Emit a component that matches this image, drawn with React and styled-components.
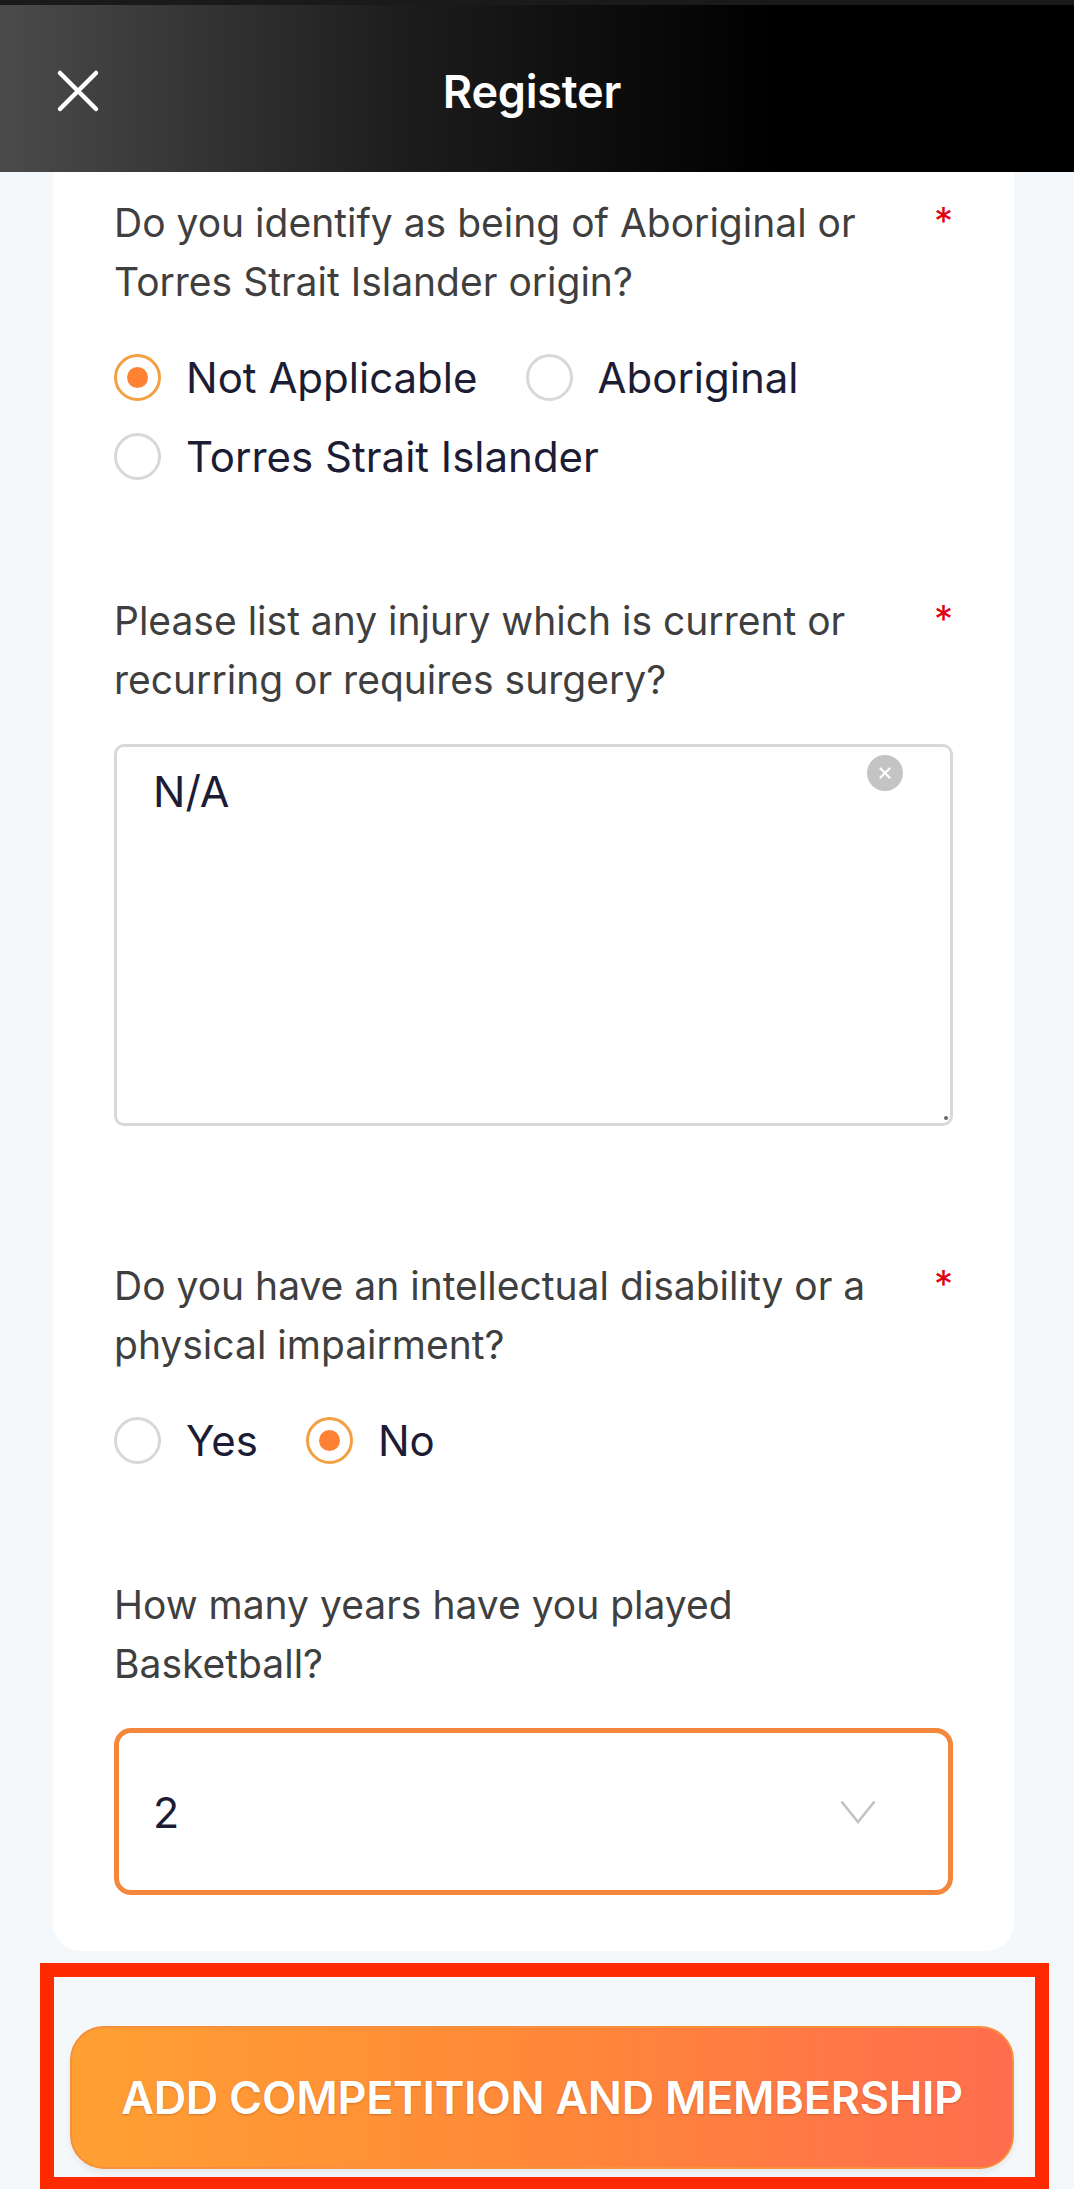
import styled, { createGlobalStyle } from "styled-components";

const GlobalStyle = createGlobalStyle`
  * { box-sizing: border-box; }
  body {
    margin: 0;
    background: #f5f8fb;
    font-family: Inter, "Noto Sans", sans-serif;
  }
`;

const Page = styled.div`
  width: 1074px;
  height: 2189px;
  overflow: hidden;
  display: flex;
  flex-direction: column;
  background: #f5f8fb;
`;

const Header = styled.header`
  height: 172px;
  flex-shrink: 0;
  display: grid;
  grid-template-columns: 1fr auto 1fr;
  align-items: center;
  padding: 5px 56px 0;
  background: linear-gradient(90deg, #4b4b4b 0%, #1c1c1c 38%, #000 72%);
  border-top: 5px solid #1a1a1a;

  >h1 {
    margin: 0 0 0 -10px;
    color: #fff;
    font-size: 45px;
    font-weight: 600;
    letter-spacing: -0.2px;
  }
`;

const CloseButton = styled.button`
  justify-self: start;
  width: 44px;
  height: 44px;
  padding: 0;
  border: 0;
  background: none;
  display: flex;
`;

const Card = styled.main`
  margin: 0 60px 0 53px;
  padding: 22px 61px 56px;
  background: #fff;
  border-radius: 0 0 28px 28px;
  display: flex;
  flex-direction: column;
  gap: 107px;
`;

const Field = styled.section`
  display: flex;
  flex-direction: column;
`;

const LabelRow = styled.div`
  display: flex;
  justify-content: space-between;
  align-items: flex-start;
  color: #3f3f3f;
  font-size: 39px;
  line-height: 58.5px;

  >label {
    width: 800px;
  }
`;

const Required = styled.span`
  color: #e3000f;
  font-size: 38px;
  line-height: 54px;
`;

const RadioGroup = styled.div`
  margin-top: 38px;
  display: flex;
  flex-wrap: wrap;
  column-gap: 48px;
  row-gap: 22px;
`;

const RadioOption = styled.label`
  height: 57px;
  display: flex;
  align-items: center;
  gap: 25px;
  color: #1c1c34;
  font-size: 42px;
`;

const RadioCircle = styled.span`
  width: 47px;
  height: 47px;
  flex-shrink: 0;
  border-radius: 50%;
  border: 3px solid ${(p) => (p.$checked ? "#f2a042" : "#d8d8d8")};
  display: flex;
  align-items: center;
  justify-content: center;

  &::after {
    content: "";
    width: 21px;
    height: 21px;
    border-radius: 50%;
    background: #ff8234;
    display: ${(p) => (p.$checked ? "block" : "none")};
  }
`;

const TextBox = styled.div`
  position: relative;
  margin: 35px 0 24px;

  &::after {
    content: "";
    position: absolute;
    right: 5px;
    bottom: 6px;
    width: 4px;
    height: 4px;
    border-radius: 50%;
    background: #666;
  }
`;

const TextArea = styled.textarea`
  display: block;
  width: 100%;
  height: 382px;
  padding: 16px 36px;
  border: 3px solid #d9d9d9;
  border-radius: 10px;
  font-family: inherit;
  font-size: 43px;
  line-height: 56px;
  color: #1c1c34;
  outline: none;
  resize: none;
`;

const ClearButton = styled.span`
  position: absolute;
  top: 11px;
  right: 50px;
  width: 36px;
  height: 36px;
  border-radius: 50%;
  background: #c4c4c4;
  display: flex;
  align-items: center;
  justify-content: center;
`;

const Select = styled.div`
  margin-top: 35px;
  height: 167px;
  border: 5px solid #f5873d;
  border-radius: 17px;
  display: flex;
  align-items: center;
  justify-content: space-between;
  padding: 0 72px 0 34px;
  color: #1c1c34;
  font-size: 43px;
`;

const Footer = styled.footer`
  margin: 12px 25px 0 40px;
  border: 14px solid #ff2a00;
  padding: 49px 21px 8px 16px;
  flex-shrink: 0;
`;

const SubmitButton = styled.button`
  width: 100%;
  height: 143px;
  border: 2px solid #f6903d;
  border-radius: 34px;
  background: linear-gradient(90deg, #ffa033 0%, #ff8838 50%, #ff6d4e 100%);
  box-shadow: 0 4px 6px rgba(0, 0, 0, 0.06);
  color: #fff;
  font-family: inherit;
  font-size: 45px;
  font-weight: 600;
  letter-spacing: -0.3px;
  text-shadow: 0 1px 2px rgba(120, 50, 0, 0.35);
`;

const Radio = ({ label, checked }) => (
  <RadioOption>
    <RadioCircle $checked={checked} />
    {label}
  </RadioOption>
);

const Question = ({ text, required }) => (
  <LabelRow>
    <label>{text}</label>
    {required && <Required>*</Required>}
  </LabelRow>
);

const App = () => {
  return (
    <Page>
      <GlobalStyle />
      <Header>
        <CloseButton aria-label="Close">
          <svg width="44" height="44" viewBox="0 0 44 44">
            <path d="M4 4 L40 40 M40 4 L4 40" stroke="#fff" strokeWidth="4.5" strokeLinecap="round" />
          </svg>
        </CloseButton>
        <h1>Register</h1>
        <span />
      </Header>

      <Card>
        <Field>
          <Question required text="Do you identify as being of Aboriginal or Torres Strait Islander origin?" />
          <RadioGroup>
            <Radio label="Not Applicable" checked />
            <Radio label="Aboriginal" />
            <Radio label="Torres Strait Islander" />
          </RadioGroup>
        </Field>

        <Field>
          <Question required text="Please list any injury which is current or recurring or requires surgery?" />
          <TextBox>
            <TextArea defaultValue="N/A" />
            <ClearButton>
              <svg width="12" height="12" viewBox="0 0 12 12">
                <path d="M1.5 1.5 L10.5 10.5 M10.5 1.5 L1.5 10.5" stroke="#fff" strokeWidth="2.2" strokeLinecap="round" />
              </svg>
            </ClearButton>
          </TextBox>
        </Field>

        <Field>
          <Question required text="Do you have an intellectual disability or a physical impairment?" />
          <RadioGroup>
            <Radio label="Yes" />
            <Radio label="No" checked />
          </RadioGroup>
        </Field>

        <Field>
          <Question text="How many years have you played Basketball?" />
          <Select>
            <span>2</span>
            <svg width="36" height="24" viewBox="0 0 36 24">
              <path d="M1.5 1.5 L18 22 L34.5 1.5" fill="none" stroke="#c2c2c2" strokeWidth="2.6" />
            </svg>
          </Select>
        </Field>
      </Card>

      <Footer>
        <SubmitButton>ADD COMPETITION AND MEMBERSHIP</SubmitButton>
      </Footer>
    </Page>
  );
};

export default App;
